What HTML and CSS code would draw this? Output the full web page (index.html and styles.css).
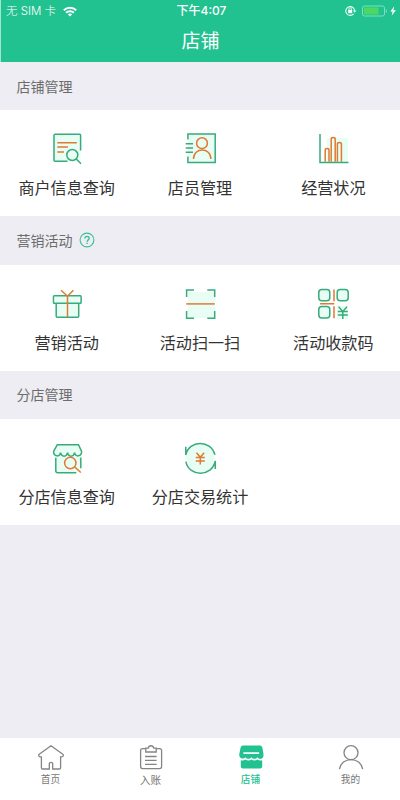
FILE: index.html
```html
<!DOCTYPE html>
<html lang="zh-CN">
<head>
<meta charset="utf-8">
<title>店铺</title>
<link rel="stylesheet" href="styles.css">
</head>
<body>
<div class="app">
  <header class="header">
    <div class="status">
      <div class="carrier"><span>无 SIM 卡</span>
        <svg width="14" height="11" viewBox="0 0 14 11" fill="none" stroke="#fff" stroke-width="2"><path d="M.8 4.2a9 9 0 0 1 12.4 0M3.1 6.8a5.6 5.6 0 0 1 7.8 0"/><path d="M4.9 8.4a3.2 3.2 0 0 1 4.2 0L7 10.6z" fill="#fff" stroke="none"/></svg>
      </div>
      <div class="time">下午4:07</div>
      <div class="indicators">
        <svg width="52" height="12" viewBox="0 0 52 12" fill="none"><path d="M8.6 8.8A4.4 4.4 0 1 1 9.6 6" stroke="#e6fff4" stroke-width="1.1"/><path d="M8 5.4h3.4L9.7 7.8z" fill="#e6fff4"/><rect x="3.2" y="5" width="4" height="3.2" fill="#fff"/><path d="M4 5V4a1.2 1.2 0 0 1 2.4 0v1" stroke="#fff" stroke-width=".8"/><rect x="17.5" y="1" width="22" height="10" rx="2" stroke="#80dfbd"/><rect x="19" y="2.5" width="14.5" height="7" rx=".7" fill="#4bd964"/><path d="M41.3 4.4v3.2" stroke="#80dfbd"/><path d="M49.2 1.2 45.3 6.6h2.4l-1.1 4.2 4.3-5.6h-2.6z" fill="#fff"/></svg>
      </div>
    </div>
    <h1 class="title">店铺</h1>
  </header>

  <main class="content">
    <h2 class="section first">店铺管理</h2>
    <div class="grid">
      <div class="item">
        <svg class="icon" viewBox="0 0 40 40"><path class="tint" d="M7 5.3h26.6v27H7z"/><path class="g" d="M33.6 21.5V6.3a1 1 0 0 0-1-1H8a1 1 0 0 0-1 1v25a1 1 0 0 0 1 1h12.5"/><path class="o" d="M10.3 13.7h19.5M10.3 18H21M10.3 23H17"/><circle class="g" cx="25.3" cy="26" r="5.5"/><path class="g" d="m29.3 30 4.7 4.7"/></svg>
        <span>商户信息查询</span>
      </div>
      <div class="item">
        <svg class="icon" viewBox="0 0 40 40"><path class="tint" d="M8 5h27v28H8z"/><path class="g" d="M7.9 10.5V5h27.3v28.5H7.9v-6M5.7 14.7h7.3M5.7 19h7.3M5.7 23.3h7.3"/><circle class="o" cx="22" cy="14.2" r="5.4"/><path class="o" d="M13.5 30c0-12 17.4-12 17.4 0"/></svg>
        <span>店员管理</span>
      </div>
      <div class="item">
        <svg class="icon" viewBox="0 0 40 40"><path class="tint" d="M14 9h21v24H14z"/><path class="o" d="M12.2 32.7V21.2q0-1.6 1.9-1.6t1.9 1.6v11.5M18.2 32.7V10.2q0-1.6 2-1.6t2 1.6v22.5M24.4 32.7V15q0-1.6 2-1.6t2 1.6v17.7"/><path class="g" d="M7 5v28.4h28.5"/></svg>
        <span>经营状况</span>
      </div>
    </div>

    <h2 class="section">营销活动
      <svg class="help" viewBox="0 0 16 16"><circle cx="8" cy="8" r="6.9"/><path d="M5.9 6.6C5.9 3.7 10.2 3.8 10.2 6.3 10.2 7.9 8.1 7.8 8.1 9.7M8.1 10.7v1.3" stroke-width="1.4"/></svg>
    </h2>
    <div class="grid">
      <div class="item">
        <svg class="icon" viewBox="0 0 40 40"><path class="tint" d="M9 12h23v21H9z"/><rect class="g" x="6.5" y="11.8" width="27.6" height="7.4" rx=".8"/><path class="g" d="M9.2 19.2v13q0 1 1 1h20.5q1 0 1-1v-13"/><path class="o" d="M20.5 12v21M14 6.2l6.5 6 5.9-6"/></svg>
        <span>营销活动</span>
      </div>
      <div class="item">
        <svg class="icon" viewBox="0 0 40 40"><path class="tint" d="M8 8h27v26H8z"/><path class="g" d="M6.6 13V5.9H14M27.3 5.9h7.4V13M6.6 27v7.2H14M27.3 34.2h7.4V27"/><path class="o" d="M6.3 19.9h28.5"/></svg>
        <span>活动扫一扫</span>
      </div>
      <div class="item">
        <svg class="icon" viewBox="0 0 40 40"><rect class="tint" x="24" y="22" width="11" height="13"/><g class="g filled"><rect x="5.8" y="5.4" width="11" height="11.4" rx="3"/><rect x="24.2" y="5.4" width="11" height="11.4" rx="3"/><rect x="5.8" y="22.6" width="11" height="11.4" rx="3"/></g><path class="g" d="m25.6 22.8 4.2 4.6 4.2-4.6M24.8 27.4h10M24.8 31h10M29.8 27.4V35"/><path class="o" d="M21 5.5v11.7M21 22.3v12M7 19.8h14.3"/></svg>
        <span>活动收款码</span>
      </div>
    </div>

    <h2 class="section">分店管理</h2>
    <div class="grid">
      <div class="item">
        <svg class="icon" viewBox="0 0 40 40"><path class="tint" d="M9 7h23l2 9-2 18H9L7 14z"/><path class="g" d="M10.3 6.7h21.2l3.1 6.8c0 5.4-6.5 5.8-7 1.2-.8 4.6-6.3 4.6-7 0-.8 4.6-6.3 4.6-7 0-.7 4.6-7 4.2-7-1.2zM8.8 19.7v13q0 2 2 2h18.5M33.8 19.4v10.8"/><circle class="o tinted" cx="23.3" cy="25" r="5.7"/><path class="o" d="m27.5 28.8 6.3 5.7"/></svg>
        <span>分店信息查询</span>
      </div>
      <div class="item">
        <svg class="icon" viewBox="0 0 40 40"><circle class="tint" cx="20.3" cy="20.3" r="14"/><path class="g" d="M5.8 8.7V17C9 1.8 30.8 1.3 34.9 16.8M35.3 31v-8C32 39 9.2 39.3 5.8 23.6"/><path class="o" d="m16.5 14.7 3.8 4.6 3.8-4.6M15.8 19.6h9M15.8 23h9M20.3 19.4v7.2"/></svg>
        <span>分店交易统计</span>
      </div>
    </div>
  </main>

  <nav class="tabs">
    <div class="tab"><svg viewBox="0 0 28 28"><path d="M15 1.7 3.2 10.2c-1.2 1.2-.2 2.8 1.2 2.6h1v11q0 1.2 1.2 1.2h6.7v-5.2q0-1.5 1.7-1.5t1.7 1.5V25h6.7q1.2 0 1.2-1.2v-11h1c1.4.2 2.4-1.4 1.2-2.6z"/></svg><span>首页</span></div>
    <div class="tab wide"><svg viewBox="0 0 28 28"><path d="M9.7 4.6H6.6q-2 0-2 2v16q0 2 2 2h17q2 0 2-2v-16q0-2-2-2h-3.3M9.8 8V4.2h2.4c.5-3.3 5-3.3 5.5 0h2.5V8zM9 12.5h11.6M9 16.4h11.6M9 20.4h11.6"/></svg><span>入账</span></div>
    <div class="tab active"><svg viewBox="0 0 28 28"><path class="solid" d="M7 1.4h17q1.8 0 2.3 2l1.1 6.2q.7 5-3 5.3-2 0-3-1.6c-1.5 2-4.5 2-6 0-1.5 2-4.5 2-6 0-1 1.6-6.2 2.6-6.2-2.7L4.6 3.4q.6-2 2.4-2z"/><path class="solid" d="M4.8 16.3c1.7.5 3.4.2 4.6-.8 1.6 1.3 4.4 1.3 6 0 1.6 1.3 4.4 1.3 6 0 1.3 1 3 1.3 4.8.8v6.2q0 2-2 2H6.8q-2 0-2-2z"/><path class="cut" d="M7.4 9.1h15.7"/></svg><span>店铺</span></div>
    <div class="tab"><svg viewBox="0 0 28 28"><circle cx="15" cy="8.7" r="7"/><path d="M3.4 25.2c1.8-12.7 21.5-12.7 23.3 0"/></svg><span>我的</span></div>
  </nav>
</div>
</body>
</html>
```
FILE: styles.css
```css
* { box-sizing: border-box; }
body {
  margin: 0;
  font-family: "Liberation Sans", "Noto Sans CJK SC", sans-serif;
  color: #333;
}
.app {
  height: 800px;
  display: flex;
  flex-direction: column;
  background: #eeedf3;
  overflow: hidden;
}
.header {
  height: 62px;
  flex: none;
  background: #22c190;
  color: #fff;
  border-left: 1px solid #a5e5d0;
}
.status {
  height: 20px;
  display: grid;
  grid-template-columns: 1fr auto 1fr;
  align-items: center;
  padding: 0 3px 0 5px;
  font-size: 12px;
  line-height: 20px;
}
.carrier {
  display: flex;
  align-items: center;
  gap: 7px;
  padding-top: 1px;
  font-family: Inter, "Noto Sans CJK SC", sans-serif;
  font-size: 11.5px;
  font-weight: 300;
  white-space: nowrap;
}
.time { padding-top: 1px; font-family: Inter, "Noto Sans CJK SC", sans-serif; font-weight: 500; }
.indicators { display: flex; justify-content: flex-end; }
.title {
  margin: 0;
  padding-top: 1px;
  font-size: 19px;
  font-weight: 400;
  line-height: 41px;
  text-align: center;
}
.content { flex: 1; }
.section {
  margin: 0;
  height: 48.5px;
  padding: 0 0 1px 16.5px;
  display: flex;
  align-items: center;
  gap: 6px;
  font-size: 14px;
  font-weight: 400;
  color: #6c6c6c;
}
.section.first { height: 48px; }
.help { width: 16px; height: 16px; fill: none; stroke: #3cbf99; stroke-width: 1.1; }
.grid {
  height: 106px;
  display: grid;
  grid-template-columns: repeat(3, 1fr);
  background: #fff;
}
.item {
  display: flex;
  flex-direction: column;
  align-items: center;
  padding-top: 19px;
  font-size: 16.1px;
  line-height: 24px;
}
.item span { margin-top: 7px; }
.icon { width: 40px; height: 40px; flex: none; }
.icon * { fill: none; stroke-width: 1.5; }
.icon .tint { fill: #e8fdf4; stroke: none; }
.icon .g { stroke: #37ab7b; }
.icon .o { stroke: #e07a32; }
.icon .filled rect, .icon .tinted { fill: #e8fdf4; }
.tabs {
  height: 62px;
  flex: none;
  display: grid;
  grid-template-columns: repeat(4, 1fr);
  background: #fff;
}
.tab {
  display: flex;
  flex-direction: column;
  align-items: center;
  padding-top: 6px;
  font-size: 9.7px;
  line-height: 14px;
  color: #777;
}
.tab.wide { font-size: 10.7px; }
.tab svg { width: 28px; height: 28px; fill: none; stroke: #858585; stroke-width: 1.3; }
.tab span { margin: 1px 0 0 1px; }
.tab.active { color: #22c190; font-weight: 500; }
.tab .solid { fill: #22c190; stroke: none; }
.tab .cut { stroke: #fff; stroke-width: 1.7; }
```
